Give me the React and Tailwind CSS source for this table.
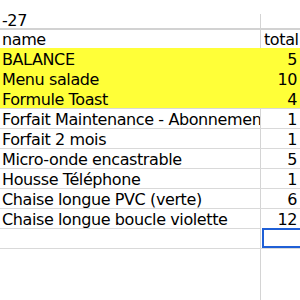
const rows = [
    { name: "BALANCE", total: 5, hl: true },
    { name: "Menu salade", total: 10, hl: true },
    { name: "Formule Toast", total: 4, hl: true },
    { name: "Forfait Maintenance - Abonnement", total: 1 },
    { name: "Forfait 2 mois", total: 1 },
    { name: "Micro-onde encastrable", total: 5 },
    { name: "Housse Téléphone", total: 1 },
    { name: "Chaise longue PVC (verte)", total: 6 },
    { name: "Chaise longue boucle violette", total: 12 },
]

export default function App() {
    return (
        <div className="w-[300px] h-[300px] overflow-hidden bg-white text-[16px] tracking-[-0.4px] text-black" style={{ fontFamily: '"DejaVu Sans", Verdana, sans-serif' }}>
            {/* date row, cut off at the left */}
            <div className="flex h-[28px]">
                <div className="w-[260px] shrink-0 px-[2px] leading-[18px] pt-[12px] whitespace-nowrap">-27</div>
                <div className="flex-1 mt-[14px] border-l border-[#d4d4d4]"></div>
            </div>
            <div className="h-[2px] bg-[#d2d2d2]"></div>

            {/* header */}
            <div className="flex h-[18px]">
                <div className="w-[260px] shrink-0 px-[2px] leading-[18px] pt-[1px]">name</div>
                <div className="flex-1 border-l border-[#d4d4d4] px-[3px] leading-[18px] pt-[1px]">total</div>
            </div>

            {rows.map(r => (
                <div
                    key={r.name}
                    className={r.hl ? "flex h-[20px] bg-[#ffff38]" : "flex h-[20px] border-t border-[#d9d9d9]"}
                >
                    <div className={r.hl ? "w-[260px] shrink-0 px-[2px] leading-[18px] pt-[3px] whitespace-nowrap overflow-x-clip" : "w-[260px] shrink-0 px-[2px] leading-[18px] pt-[2px] whitespace-nowrap overflow-x-clip"}>
                        {r.name}
                    </div>
                    <div className={r.hl ? "flex-1 px-[3px] text-right leading-[18px] pt-[3px]" : "flex-1 border-l border-[#d4d4d4] px-[3px] text-right leading-[18px] pt-[2px]"}>
                        {r.total}
                    </div>
                </div>
            ))}

            {/* empty rows, selected cell */}
            <div className="flex h-[20px]">
                <div className="w-[260px] shrink-0 border-t border-[#d9d9d9]"></div>
                <div className="flex-1 border-l border-[#d4d4d4] pl-px">
                    <div className="h-[20px] border-2 border-[#1f5fd6] -mr-[4px]"></div>
                </div>
            </div>
            <div className="flex h-[60px] border-t border-[#d9d9d9]">
                <div className="w-[260px] shrink-0"></div>
                <div className="flex-1 border-l border-[#d4d4d4]"></div>
            </div>
        </div>
    )
}
